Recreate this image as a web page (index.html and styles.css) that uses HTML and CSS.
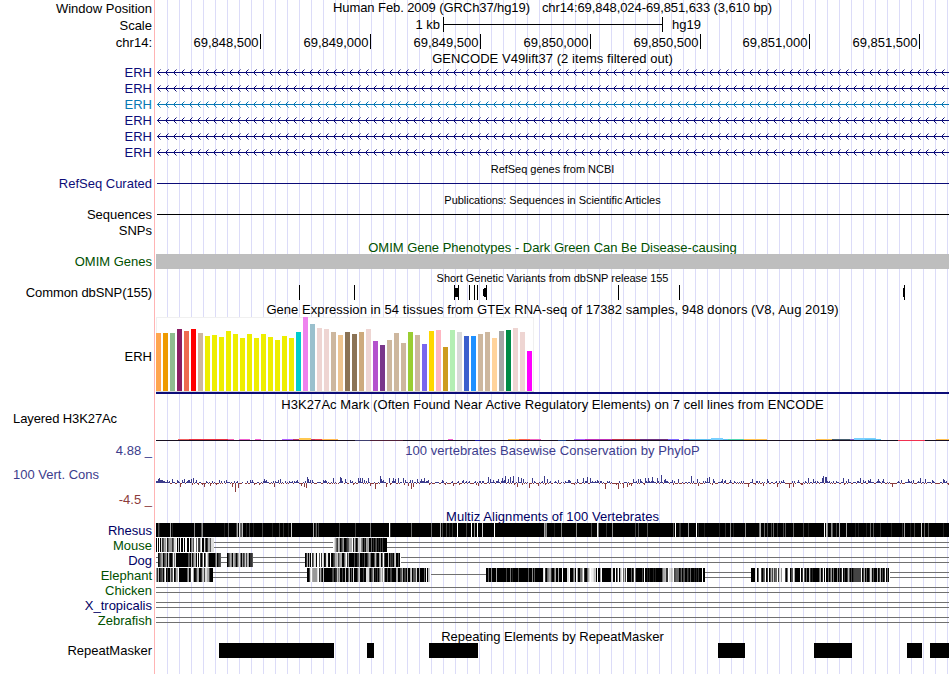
FILE: index.html
```html
<!DOCTYPE html>
<html lang="en">

<head>
    <meta charset="UTF-8">
    <meta name="viewport" content="width=device-width, initial-scale=1.0">
    <title>chr14:69,848,024-69,851,633</title>
    <link rel="stylesheet" href="styles.css">
</head>

<body>
    <div class="browser">
        <div class="row h17">
            <div class="label">Window Position</div>
            <div class="title position"><span>Human Feb. 2009 (GRCh37/hg19)</span><span>chr14:69,848,024-69,851,633 (3,610 bp)</span></div>
        </div>
        <div class="row h17">
            <div class="label">Scale</div>
            <svg class="data" id="scale"></svg>
        </div>
        <div class="row h17">
            <div class="label">chr14:</div>
            <svg class="data" id="ruler"></svg>
        </div>

        <div class="row h13"><div class="title wide">GENCODE V49lift37 (2 items filtered out)</div></div>
        <div class="row h16 gene"><div class="label">ERH</div><svg class="data arrows"></svg></div>
        <div class="row h16 gene"><div class="label">ERH</div><svg class="data arrows"></svg></div>
        <div class="row h16 gene light"><div class="label">ERH</div><svg class="data arrows"></svg></div>
        <div class="row h16 gene"><div class="label">ERH</div><svg class="data arrows"></svg></div>
        <div class="row h16 gene"><div class="label">ERH</div><svg class="data arrows"></svg></div>
        <div class="row h16 gene"><div class="label">ERH</div><svg class="data arrows"></svg></div>

        <div class="row h16"><div class="title small">RefSeq genes from NCBI</div></div>
        <div class="row h15 gene"><div class="label">RefSeq Curated</div><svg class="data" id="refseq"></svg></div>

        <div class="row h16"><div class="title small">Publications: Sequences in Scientific Articles</div></div>
        <div class="row h15"><div class="label">Sequences</div><svg class="data" id="sequences"></svg></div>
        <div class="row h16"><div class="label">SNPs</div></div>

        <div class="row h16 omim"><div class="title">OMIM Gene Phenotypes - Dark Green Can Be Disease-causing</div></div>
        <div class="row h15 omim"><div class="label">OMIM Genes</div><div class="data omim-bar"></div></div>

        <div class="row h16"><div class="title small">Short Genetic Variants from dbSNP release 155</div></div>
        <div class="row h15"><div class="label tight">Common dbSNP(155)</div><svg class="data" id="snp"></svg></div>

        <div class="row h17"><div class="title wide">Gene Expression in 54 tissues from GTEx RNA-seq of 17382 samples, 948 donors (V8, Aug 2019)</div></div>
        <div class="row h79"><div class="label">ERH</div><svg class="data" id="gtex"></svg></div>

        <div class="row h16"><div class="title wide">H3K27Ac Mark (Often Found Near Active Regulatory Elements) on 7 cell lines from ENCODE</div></div>
        <div class="row h30"><div class="label left tight">Layered H3K27Ac</div><svg class="data" id="h3k27ac"></svg></div>

        <div class="row h16 cons"><div class="label">4.88 _</div><div class="title wide">100 vertebrates Basewise Conservation by PhyloP</div></div>
        <div class="row h50 cons">
            <div class="label-stack">
                <div class="label left">100 Vert. Cons</div>
                <div class="label min">-4.5 _</div>
            </div>
            <svg class="data" id="phylop"></svg>
        </div>

        <div class="row h15 species"><div class="title wide">Multiz Alignments of 100 Vertebrates</div></div>
        <div class="row h15 species"><div class="label">Rhesus</div><svg class="data" id="rhesus"></svg></div>
        <div class="row h15 species green"><div class="label">Mouse</div><svg class="data" id="mouse"></svg></div>
        <div class="row h15 species"><div class="label">Dog</div><svg class="data" id="dog"></svg></div>
        <div class="row h15 species green"><div class="label">Elephant</div><svg class="data" id="elephant"></svg></div>
        <div class="row h15 species green"><div class="label">Chicken</div><svg class="data" id="chicken"></svg></div>
        <div class="row h15 species"><div class="label">X_tropicalis</div><svg class="data" id="xtropicalis"></svg></div>
        <div class="row h15 species green"><div class="label">Zebrafish</div><svg class="data" id="zebrafish"></svg></div>

        <div class="row h15"><div class="title">Repeating Elements by RepeatMasker</div></div>
        <div class="row h15"><div class="label">RepeatMasker</div><svg class="data" id="repeats"></svg></div>
    </div>
    <script src="tracks.js"></script>
</body>

</html>
```

FILE: styles.css
```css
* {
    margin: 0;
    padding: 0;
    box-sizing: border-box;
}

body {
    background: #fff;
    font-family: "Liberation Sans", Arial, sans-serif;
    font-size: 13px;
    color: #000;
}

.browser {
    width: 949px;
    height: 674px;
    overflow: hidden;
    /* red edge of the label column, then the blue guide lines */
    background:
        linear-gradient(#ffb4b4, #ffb4b4) 154px 0 / 1px 100% no-repeat,
        repeating-linear-gradient(90deg, #dcdcf8 0, #dcdcf8 1px, transparent 1px, transparent 12px) 167px 0 / 782px 100% no-repeat;
}

.row {
    display: flex;
    width: 949px;
    white-space: nowrap;
}

.h13 { height: 13px; line-height: 13px; }
.h15 { height: 15px; line-height: 15px; }
.h16 { height: 16px; line-height: 16px; }
.h17 { height: 17px; line-height: 17px; }
.h30 { height: 30px; line-height: 13px; }
.h50 { height: 50px; line-height: 34px; }
.h79 { height: 79px; line-height: 79px; }

.label {
    flex: none;
    width: 156px;
    padding-right: 4px;
    text-align: right;
}

.h16 .label {
    padding-top: 1px;
}

.label.left {
    padding-left: 13px;
    text-align: left;
}

.label.tight {
    letter-spacing: -0.1px;
}

.label-stack {
    flex: none;
    width: 156px;
}

.label.min {
    line-height: 16px;
    color: #8c3c3c;
}

.title {
    flex: 1;
    margin-left: 156px;
    padding-top: 1px;
    text-align: center;
}

.label + .title {
    margin-left: 0;
}

.wide {
    letter-spacing: 0.055px;
}

.small {
    font-size: 11px;
    letter-spacing: -0.03px;
}

.omim .title {
    padding-top: 2px;
}

.position {
    display: flex;
    justify-content: center;
    gap: 12px;
    padding-top: 0;
    line-height: 15px;
    letter-spacing: -0.09px;
}

.data {
    display: block;
    flex: none;
    width: 793px;
    height: 100%;
    shape-rendering: crispEdges;
}

.gene {
    color: #0c0c78;
}

.light {
    color: #0878b4;
}

.omim {
    color: #005000;
}

.omim-bar {
    background: #bebebe;
}

.cons {
    color: #3c3c8c;
}

.species {
    color: #000064;
}

.species.green .label {
    color: #005000;
}
```

FILE: tracks.js
```js
var LEFT = 156;
var WIDTH = 793;
var RIGHT = LEFT + WIDTH;

function rect(x, y, w, h, fill) {
    return '<rect x="' + x + '" y="' + y + '" width="' + w + '" height="' + h + '" fill="' + (fill || '#000') + '"/>';
}

// all tracks share the x axis of the whole image
function draw(svg, content) {
    var height = svg.parentNode.clientHeight;
    svg.setAttribute('viewBox', LEFT + ' 0 ' + WIDTH + ' ' + height);
    svg.innerHTML = content;
}

function byId(id) {
    return document.getElementById(id);
}

// scale
draw(byId('scale'),
    '<text x="440" y="12" text-anchor="end">1 kb</text>' +
    rect(443, 0, 1, 15) + rect(443, 7, 219, 1) + rect(662, 0, 1, 15) +
    '<text x="672" y="12">hg19</text>');

// ruler
var ruler = '';
[[260, '69,848,500'], [370, '69,849,000'], [480, '69,849,500'], [590, '69,850,000'],
 [700, '69,850,500'], [809, '69,851,000'], [919, '69,851,500']].forEach(function (t) {
    ruler += '<text x="' + (t[0] - 1.5) + '" y="13" text-anchor="end">' + t[1] + '</text>' + rect(t[0], 0, 1, 15);
});
draw(byId('ruler'), ruler);

// genes
var arrows = document.getElementsByClassName('arrows');
for (var i = 0; i < arrows.length; i++) {
    var s = rect(LEFT + 1, 8, WIDTH - 1, 1, 'currentColor');
    for (var x = 157; x < RIGHT; x += 8) {
        s += rect(x, 8, 1, 1, 'currentColor') + rect(x + 1, 7, 1, 3, 'currentColor');
        s += rect(x + 2, 6, 1, 1, 'currentColor') + rect(x + 2, 10, 1, 1, 'currentColor');
        s += '<g opacity="0.5">' + rect(x + 3, 5, 1, 1, 'currentColor') + rect(x + 3, 11, 1, 1, 'currentColor') + '</g>';
    }
    draw(arrows[i], s);
}
draw(byId('refseq'), rect(157, 7, 792, 1, 'currentColor'));
draw(byId('sequences'), rect(157, 7, 792, 1));

// variants
var snp = '';
[299, 354, 454, 458, 469, 474, 477, 486, 618, 679, 904].forEach(function (x) {
    snp += rect(x, 0, 1, 15);
});
snp += rect(455, 3, 3, 9) + rect(483, 4, 1, 7) + rect(484, 3, 2, 9) + rect(903, 3, 1, 9);
draw(byId('snp'), snp);

// expression: color and height of each tissue
var tissues = [
    ['ffa54f', 58], ['ee9a00', 58], ['8fbc8f', 58], ['8b1c62', 62], ['ee6a50', 60], ['ff0000', 62], ['cdb79e', 58],
    ['eeee00', 55], ['eeee00', 56], ['eeee00', 54], ['eeee00', 60], ['eeee00', 57], ['eeee00', 53], ['eeee00', 57],
    ['eeee00', 53], ['eeee00', 57], ['eeee00', 54], ['eeee00', 51], ['eeee00', 55], ['eeee00', 53], ['00cdcd', 59],
    ['ee82ee', 74], ['9ac0cd', 67], ['eed5d2', 63], ['eed5d2', 62], ['cdb79e', 59], ['eec591', 56], ['8b7355', 59],
    ['8b7355', 57], ['cdaa7d', 59], ['eed5d2', 62], ['b452cd', 50], ['7a378b', 46], ['cdb79e', 51], ['cdb79e', 58],
    ['cdb79e', 48], ['9acd32', 59], ['cdb79e', 56], ['7a67ee', 47], ['ffd700', 60], ['ffb6c1', 61], ['cd9b1d', 44],
    ['b4eeb4', 61], ['d9d9d9', 59], ['3a5fcd', 55], ['1e90ff', 55], ['cdb79e', 57], ['cdb79e', 59], ['ffd39b', 53],
    ['a6a6a6', 60], ['008b45', 61], ['eed5d2', 63], ['eed5d2', 59], ['ff00ff', 40]
];
var gtex = rect(156, 0, 378, 75, '#f0f0f0') + rect(157, 1, 376, 73, '#fff') + rect(156, 74, 378, 1, '#d8d8d8');
tissues.forEach(function (t, i) {
    gtex += rect(156 + i * 7, 74 - t[1], 5, t[1], '#' + t[0]);
});
gtex += rect(156, 75, 793, 2, '#0c0c78');
draw(byId('gtex'), gtex);

// H3K27Ac: [x, width, color, height]
var h3 = rect(156, 28, 793, 1, '#181020');
[[178, 11, '#f06060'], [189, 39, '#e83040'], [228, 6, '#f060b0'], [239, 11, '#f060d0'], [255, 6, '#f060d0'],
 [282, 11, '#b060ff'], [293, 22, '#c03868'], [299, 12, '#ffc850', 2], [315, 7, '#f04050'], [322, 16, '#ffb850'],
 [448, 5, '#f060d0'], [508, 11, '#ffc050'], [519, 11, '#ff6050'], [530, 11, '#f060c0'],
 [574, 11, '#b060ff'], [585, 27, '#c030b8'], [612, 29, '#c03048'], [640, 28, '#703080'], [668, 11, '#8068ff'],
 [683, 6, '#8060e0'], [689, 39, '#60c0f0'], [711, 12, '#78d0ff', 2], [728, 16, '#50d8b0'], [744, 23, '#ffc050'],
 [816, 16, '#ffc050'], [832, 22, '#486070'], [850, 15, '#8060d0'], [854, 22, '#78d0ff', 2], [865, 16, '#60c0f0'],
 [936, 13, '#ffc050']].forEach(function (b) {
    var h = b[3] || 1;
    h3 += rect(b[0], 28 - h, b[1], h, b[2]);
});
h3 += rect(355, 28, 16, 1, '#404070') + rect(370, 28, 33, 1, '#502038') + rect(475, 28, 5, 1, '#1818a0') +
    rect(558, 28, 8, 1, '#204080') + rect(898, 28, 27, 1, '#f03050');
draw(byId('h3k27ac'), h3);

// conservation: tall positions, everything between them is low level noise
var peaks = {
    156: 2, 158: 4, 159: 5, 160: 3, 161: 3, 167: 3, 172: 4, 177: 3, 182: 3, 184: 4, 188: 3, 191: 4, 193: 5, 196: 3,
    180: -4, 204: -4, 210: -3, 232: -4, 235: -9, 238: -5, 264: 4, 266: 3, 274: -4, 278: 3, 280: 4, 301: -3, 304: -4, 306: -5,
    307: 6, 308: 4, 312: 3, 323: 3, 333: 5, 340: 6, 341: 5, 345: 4, 350: 3, 358: 5, 360: 5, 362: 5, 364: 3, 368: 5,
    370: -3, 375: -6, 380: 7, 381: 4, 386: -4, 389: 5, 393: 5, 395: 4, 398: 5, 403: 5, 405: 3, 408: -3, 411: -6, 413: -4,
    417: 4, 421: 4, 424: 5, 428: 3, 453: -3, 478: -3, 488: 6, 490: 4, 493: 3, 498: 4, 502: 5, 505: 7, 508: 4, 510: 6,
    513: 7, 517: -4, 518: 6, 521: 5, 523: 4, 529: -5, 532: 5, 538: -3, 544: 7, 547: 4, 558: 3, 568: 3, 577: 4, 583: 5,
    587: 6, 590: 5, 597: 3, 605: -6, 618: -6, 623: -5, 627: -4, 631: -3, 633: 4, 638: 4, 640: 4, 645: 5, 648: 5, 652: 6,
    657: 5, 661: 8, 665: 4, 678: 4, 691: 7, 697: 4, 698: -3, 707: 5, 709: 6, 713: 4, 722: 4, 730: 3, 748: -4, 752: 4,
    763: -3, 767: 4, 777: -4, 783: 3, 789: -5, 793: -4, 798: 3, 808: 5, 813: 4, 822: 5, 823: 7, 825: 6, 826: 6, 843: 5,
    848: 4, 860: 5, 870: 4, 878: 4, 883: 4, 892: -4, 908: 4, 913: 3, 920: 5, 925: 4, 932: 3, 943: 4
};
var phylop = '';
var seed = 11;
for (var x = LEFT; x < RIGHT; x++) {
    seed = (seed * 16807) % 2147483647;
    var n = seed / 2147483647;
    var v = peaks[x] || (n < 0.34 ? 1 : n < 0.5 ? 2 : n < 0.54 ? 3 : n < 0.93 ? -1 : n < 0.97 ? -2 : 0);
    if (v > 0) {
        phylop += rect(x, 25 - v, 1, v, '#3c3c8c');
    } else if (v < 0) {
        phylop += rect(x, 25, 1, -v, '#8c3c3c');
    }
}
draw(byId('phylop'), phylop);

// alignments: one hex digit of gray per pixel, lines where nothing aligns
function gap(x, end) {
    return rect(x, 4, end - x, 1, '#707070') + rect(x, 9, end - x, 1, '#707070');
}

function blocks(x, levels) {
    var out = '';
    for (var i = 0; i < levels.length; i++) {
        out += rect(x + i, 0, 1, 14, '#' + levels[i] + levels[i] + levels[i]);
    }
    return out;
}

var rhesus = rect(156, 0, 793, 14);
[[158, 5], [159, 2], [170, 10], [172, 2], [194, 8], [201, 5], [202, 8], [224, 2], [228, 6], [236, 4], [237, 10], [239, 13],
 [240, 6], [241, 5], [242, 11], [246, 2], [249, 4], [253, 2], [262, 4], [272, 2], [279, 4], [283, 3], [288, 2], [291, 12],
 [313, 10], [315, 2], [316, 6], [318, 4], [339, 4], [355, 4], [370, 7], [389, 15], [390, 3], [411, 6], [431, 6], [440, 10],
 [442, 4], [446, 4], [449, 2], [452, 3], [457, 15], [466, 4], [471, 15], [474, 8], [477, 15], [482, 12], [494, 15],
 [544, 10], [545, 6], [546, 8], [554, 2], [561, 7], [576, 8], [591, 4], [597, 14], [598, 7], [606, 3], [612, 8],
 [635, 4], [638, 5], [647, 5], [673, 5], [675, 15], [679, 3], [680, 3], [688, 9], [696, 15], [698, 2], [704, 2], [719, 2],
 [725, 3], [730, 8], [733, 2], [745, 8], [759, 7], [760, 10], [764, 6], [767, 4], [771, 4], [773, 6], [777, 3], [783, 4],
 [785, 5], [793, 6], [803, 4], [808, 2], [824, 15], [826, 12], [827, 8], [831, 8], [832, 5], [836, 4], [839, 10], [846, 10],
 [855, 2], [858, 2], [866, 2], [870, 6], [873, 5], [880, 3], [891, 2], [902, 3], [904, 9], [910, 2], [914, 4], [921, 12],
 [924, 6], [928, 5], [943, 2]].forEach(function (m) {
    rhesus += blocks(m[0], m[1].toString(16));
});
draw(byId('rhesus'), rhesus);

draw(byId('mouse'), gap(214, 333) + gap(387, RIGHT) +
    blocks(156, '0f0f0d35a9e1699936ddf0c0f00f0ff00f07a5ff6f43bf00d403aa5ddd') +
    blocks(333, 'fda63b9036900245aaaf2c603ccd86041a9a006030350203040000'));
draw(byId('dog'), gap(156, 158) + gap(221, 227) + gap(253, 305) + gap(401, RIGHT) +
    blocks(158, '1369a04690c3004e7d000000000000540a16aa0f0f306f06fc60000005a0345') +
    blocks(227, '036a80b9605ad70936c4ba0335') +
    blocks(305, '03a0a0f37ed0ff5f3ec02de10f0035aac48aa006bf3a0000040034a001050037a60005b400ac06f4000b04230ac0040'));
draw(byId('elephant'), gap(178, 179) + gap(213, 307) + rect(431, 6, 55, 1, '#707070') +
    gap(705, 751) + gap(890, RIGHT) +
    blocks(156, '9' + '3b03460af0400a46f03aaf000000006a03ffa014aa003ac4ddaa4000') +
    blocks(307, '004dfa9999df3a40b0000000045023b7a00400b006b050d0004ac000400ddd5036b020406ad9f700500440000aa0045a0340a00ac0555d00a000060f0bc') +
    blocks(486,
        '0060080000a0000000004000702000005000000000500080500000000' +
        'df3068aa3006a00a000f0000ddf0006a0fa0066af3006adfeedbc0f00af' +
        '000000000bd00f06f0adf6c4f0000603f600000040f00202000202000000' +
        '6aab33fddbcf4566602604500420600020203000f00') +
    blocks(751,
        '0000df06ff4046f03f05a4c466f3ce9fff406ff045fa00000f03f50600b30' +
        '20000006a03f0f0060590700080503f04004b504034444444f04a06004' +
        'db05000a03b0403f060f'));
['chicken', 'xtropicalis', 'zebrafish'].forEach(function (id) {
    draw(byId(id), gap(156, RIGHT));
});

// repeats
var repeats = '';
[[219, 334], [367, 374], [429, 478], [718, 745], [814, 852], [907, 922], [930, 949]].forEach(function (r) {
    repeats += rect(r[0], 0, r[1] - r[0], 15);
});
draw(byId('repeats'), repeats);
```
